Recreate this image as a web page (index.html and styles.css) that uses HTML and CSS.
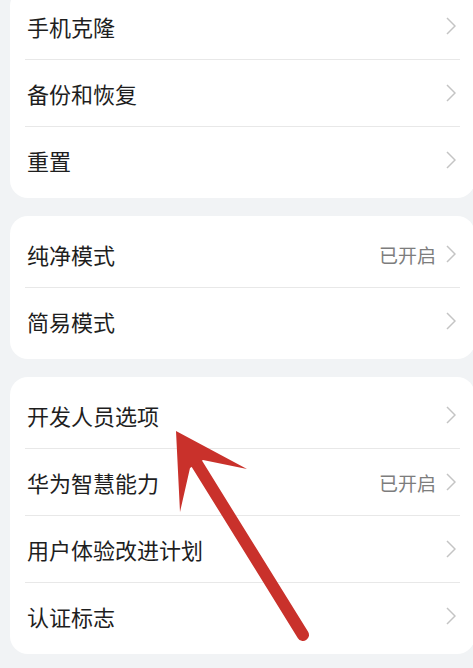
FILE: index.html
```html
<!DOCTYPE html>
<html lang="zh-CN">
<head>
    <meta charset="UTF-8">
    <meta name="viewport" content="width=device-width, initial-scale=1.0">
    <title>系统和更新</title>
    <link rel="stylesheet" href="styles.css">
</head>
<body>
    <div class="page">
        <div class="card">
            <div class="row"><span class="label">手机克隆</span><span class="chevron"><svg viewBox="0 0 10 18"><polyline points="1,1 9,9 1,17"/></svg></span></div>
            <div class="row"><span class="label">备份和恢复</span><span class="chevron"><svg viewBox="0 0 10 18"><polyline points="1,1 9,9 1,17"/></svg></span></div>
            <div class="row"><span class="label">重置</span><span class="chevron"><svg viewBox="0 0 10 18"><polyline points="1,1 9,9 1,17"/></svg></span></div>
        </div>
        <div class="card">
            <div class="row"><span class="label">纯净模式</span><span class="status">已开启</span><span class="chevron"><svg viewBox="0 0 10 18"><polyline points="1,1 9,9 1,17"/></svg></span></div>
            <div class="row"><span class="label">简易模式</span><span class="chevron"><svg viewBox="0 0 10 18"><polyline points="1,1 9,9 1,17"/></svg></span></div>
        </div>
        <div class="card">
            <div class="row"><span class="label">开发人员选项</span><span class="chevron"><svg viewBox="0 0 10 18"><polyline points="1,1 9,9 1,17"/></svg></span></div>
            <div class="row"><span class="label">华为智慧能力</span><span class="status">已开启</span><span class="chevron"><svg viewBox="0 0 10 18"><polyline points="1,1 9,9 1,17"/></svg></span></div>
            <div class="row"><span class="label">用户体验改进计划</span><span class="chevron"><svg viewBox="0 0 10 18"><polyline points="1,1 9,9 1,17"/></svg></span></div>
            <div class="row"><span class="label">认证标志</span><span class="chevron"><svg viewBox="0 0 10 18"><polyline points="1,1 9,9 1,17"/></svg></span></div>
        </div>
    </div>

    <!-- red annotation arrow drawn over the list -->
    <svg class="arrow" viewBox="0 0 473 668">
        <line x1="197" y1="464" x2="303" y2="635"/>
        <polygon points="176,431 247,469 203,460 190,468 180,512"/>
    </svg>
</body>
</html>
```

FILE: styles.css
```css
/* Settings list styles */
html, body {
    overflow: hidden;
}
body {
    margin: 0;
    padding: 0;
    background-color: #f1f3f5;
    font-family: "Noto Sans CJK SC", "Noto Sans", sans-serif;
    color: #1e1e1e;
    position: relative;
    height: 668px;
}
.page {
    margin-top: -12px;
}
.card {
    background-color: #fff;
    border-radius: 18px;
    margin: 0 -2px 18px 10px;
    padding: 5px 0;
}
.row {
    display: flex;
    align-items: center;
    height: 66px;
    margin: 0 15px;
    padding: 0 4px 0 2px;
    border-bottom: 1px solid #e8e8e8;
}
.row:last-child {
    border-bottom: none;
}
.label {
    flex: 1;
    font-size: 22px;
    line-height: 1;
}
.status {
    font-size: 19px;
    color: #7d7d7d;
    margin-right: 10px;
    line-height: 1;
}
.chevron {
    display: flex;
    width: 10px;
    height: 18px;
}
.chevron svg {
    width: 10px;
    height: 18px;
    fill: none;
    stroke: #c4c4c4;
    stroke-width: 1.5;
}
.arrow {
    position: absolute;
    top: 0;
    left: 0;
    width: 473px;
    height: 668px;
    pointer-events: none;
}
.arrow line {
    stroke: #c9312b;
    stroke-width: 12;
    stroke-linecap: round;
}
.arrow polygon {
    fill: #c9312b;
}
```
